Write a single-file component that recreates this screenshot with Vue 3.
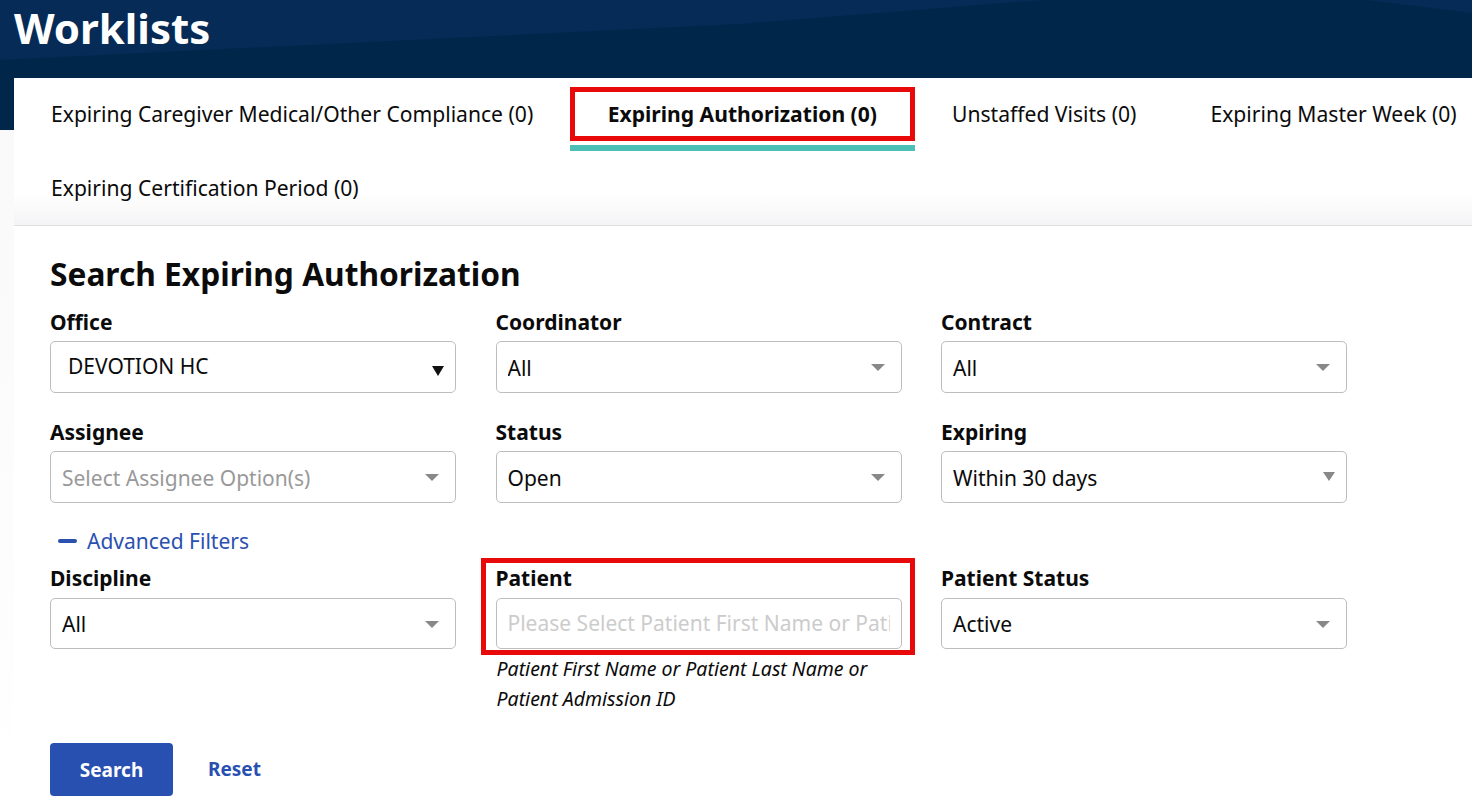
<script setup>
const tabs = [
  { label: 'Expiring Caregiver Medical/Other Compliance (0)' },
  { label: 'Expiring Authorization (0)', active: true },
  { label: 'Unstaffed Visits (0)' },
  { label: 'Expiring Master Week (0)' },
  { label: 'Expiring Certification Period (0)' }
]
const topFields = [
  { label: 'Office', value: 'DEVOTION HC', kind: 'native' },
  { label: 'Coordinator', value: 'All' },
  { label: 'Contract', value: 'All' },
  { label: 'Assignee', value: 'Select Assignee Option(s)', kind: 'placeholder' },
  { label: 'Status', value: 'Open' },
  { label: 'Expiring', value: 'Within 30 days', kind: 'small-caret' }
]
</script>

<template>
  <div class="page">
    <header class="banner">
      <h1>Worklists</h1>
    </header>
    <main class="sheet">
      <nav class="tabs">
        <div v-for="t in tabs" :key="t.label" class="tab" :class="{ active: t.active }">
          <span class="tab-text">{{ t.label }}</span>
        </div>
      </nav>
      <section class="form">
        <h2>Search Expiring Authorization</h2>
        <div class="grid top">
          <div v-for="f in topFields" :key="f.label" class="field">
            <label>{{ f.label }}</label>
            <div class="select" :class="f.kind">
              <span class="value">{{ f.value }}</span>
              <i class="caret"></i>
            </div>
          </div>
        </div>
        <div class="advanced"><i class="minus"></i><span>Advanced Filters</span></div>
        <div class="grid bottom">
          <div class="field">
            <label>Discipline</label>
            <div class="select"><span class="value">All</span><i class="caret"></i></div>
          </div>
          <div class="field patient">
            <label>Patient</label>
            <div class="select input"><span class="value">Please Select Patient First Name or Patient Last Name or Patient Admission ID</span></div>
            <p class="hint">Patient First Name or Patient Last Name or Patient Admission ID</p>
          </div>
          <div class="field">
            <label>Patient Status</label>
            <div class="select"><span class="value">Active</span><i class="caret"></i></div>
          </div>
        </div>
        <div class="actions">
          <button class="search">Search</button>
          <a class="reset">Reset</a>
        </div>
      </section>
    </main>
  </div>
</template>

<style>
html, body { margin: 0; background: #f9f9fa; overflow: hidden; }
</style>

<style scoped>
.page {
  width: 1472px;
  height: 810px;
  overflow: hidden;
  font-family: "Noto Sans", sans-serif;
  color: #0b0b0b;
  background: linear-gradient(#f8f8f9, #fff);
}
.banner {
  position: relative;
  height: 130px;
  background: #002649;
  overflow: hidden;
}
.banner::before {
  content: "";
  position: absolute;
  inset: 0;
  background: #052b56;
  clip-path: polygon(0 0, 1044px 0, 740px 24px, 0 60px);
}
.banner::after {
  content: "";
  position: absolute;
  inset: 0;
  background: #052b56;
  clip-path: polygon(1366px 0, 1472px 0, 1472px 13px);
}
h1 {
  position: relative;
  z-index: 1;
  margin: 0;
  padding: 1px 0 0 14px;
  font-size: 42px;
  line-height: 54px;
  font-weight: 700;
  color: #fff;
}
.sheet {
  position: relative;
  margin: -52px 0 0 14px;
  background: #fff;
  width: 1510px;
  height: 732px;
}
.tabs {
  display: flex;
  flex-wrap: wrap;
  box-sizing: border-box;
  height: 148px;
  padding-top: 9px;
  border-bottom: 1px solid #dedede;
  background: linear-gradient(#fff 78%, #f4f4f6);
}
.tab {
  box-sizing: border-box;
  height: 54px;
  margin-bottom: 20px;
  padding: 0 32px 2px;
  border: 5px solid transparent;
  position: relative;
  display: flex;
  align-items: center;
  font-size: 21.1px;
  white-space: nowrap;
}
.tab.active {
  border-color: #e80a0a;
  font-weight: 700;
  padding: 0 33px 2px 32.5px;
}
.tab.active::after {
  content: "";
  position: absolute;
  left: -5px;
  right: -5px;
  bottom: -15px;
  height: 6px;
  background: #4cc0b7;
}
.form { padding: 28px 0 0 36px; }
h2 {
  margin: 0;
  font-size: 31.7px;
  line-height: 40px;
  font-weight: 700;
}
.grid {
  display: grid;
  grid-template-columns: repeat(3, 406px);
  column-gap: 39.5px;
}
.top { margin-top: 15px; row-gap: 26px; }
.top .value { margin-top: 2px; }
.field label {
  display: block;
  font-size: 21px;
  line-height: 27px;
  font-weight: 700;
  margin-bottom: 5px;
}
.select {
  box-sizing: border-box;
  height: 52px;
  border: 1px solid #bdbdbd;
  border-radius: 5px;
  display: flex;
  align-items: center;
  padding: 0 11px;
  background: #fff;
  font-size: 21px;
  position: relative;
}
.value { white-space: nowrap; overflow: hidden; }
.caret {
  position: absolute;
  right: 16px;
  top: 22px;
  border-left: 7px solid transparent;
  border-right: 7px solid transparent;
  border-top: 7px solid #888;
}
.select.native { padding-left: 17px; }
.top .select.native .value { margin-top: -3px; }
.select.native .caret {
  right: 11px;
  top: 24px;
  border-left-width: 6px;
  border-right-width: 6px;
  border-top: 10px solid #111;
}
.select.small-caret .caret {
  right: 11px;
  top: 20px;
  border-left-width: 6px;
  border-right-width: 6px;
  border-top-width: 9px;
}
.select.placeholder { color: #999; }
.advanced {
  display: flex;
  align-items: center;
  gap: 10px;
  margin: 23px 0 0 8px;
  height: 30px;
  font-size: 21px;
  color: #2a50b0;
}
.minus {
  width: 19px;
  height: 4px;
  border-radius: 2px;
  background: #2a50b0;
}
.bottom { margin-top: 9px; }
.bottom .select { height: 51px; }
.bottom .field label { margin-bottom: 6px; }
.select.input { color: #ccc; }
.select.input .value { margin-top: -2px; }
.patient { position: relative; }
.patient::after {
  content: "";
  position: absolute;
  left: -15px;
  top: -7px;
  width: 434px;
  height: 97px;
  box-sizing: border-box;
  border: 5px solid #e80a0a;
  pointer-events: none;
}
.hint {
  margin: 5px 0 0 1px;
  font-style: italic;
  font-size: 19.5px;
  line-height: 30px;
  width: 400px;
}
.actions {
  display: flex;
  align-items: center;
  gap: 35px;
  margin-top: 29px;
}
.search {
  width: 123px;
  height: 53px;
  border: 0;
  border-radius: 4px;
  background: #2850b0;
  color: #fff;
  font: 700 19px "Noto Sans", sans-serif;
}
.reset { color: #2850b0; font-weight: 700; font-size: 19px; margin-top: -2px; }
</style>
